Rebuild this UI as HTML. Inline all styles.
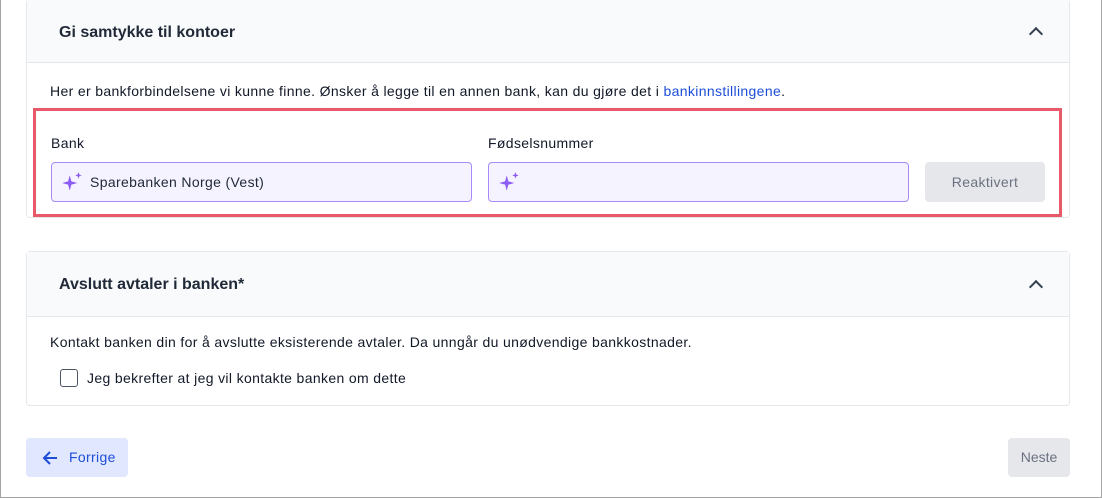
<!DOCTYPE html><html><head><style>
*{box-sizing:border-box;margin:0;padding:0}
body{width:1102px;height:498px;background:#fff;font-family:"Liberation Sans",sans-serif;color:#1f2937;position:relative;overflow:hidden}
.frame{position:absolute;left:0;top:0;width:1102px;height:498px;border:1px solid #a3a3a3;border-top:none}
.card{position:absolute;left:26px;width:1044px;border:1px solid #e5e7eb;border-radius:4px;background:#fff}
.hd{height:62px;background:#f9fafb;border-bottom:1px solid #e5e7eb;position:relative;font-weight:bold;font-size:16px;padding:24px 0 0 32px;color:#1f2937}
.chev{position:absolute;right:28px;top:29px;width:10px;height:10px;border-left:2px solid #374151;border-top:2px solid #374151;transform:rotate(45deg)}
.t{position:absolute;font-size:14px;color:#111827;letter-spacing:0.35px}
.inp{position:absolute;height:40px;border:1px solid #a78bfa;background:#f5f3ff;border-radius:4px;font-size:14px;padding:11px 0 0 38px;letter-spacing:0.35px}
.inp svg{position:absolute;left:9px;top:8px}
</style></head><body>
<div class="frame"></div>
<div class="card" style="top:-1px;height:219px">
<div class="hd" style="height:63px">Gi samtykke til kontoer<div class="chev"></div></div>
</div>
<div class="t" style="left:50px;top:83px">Her er bankforbindelsene vi kunne finne. Ønsker å legge til en annen bank, kan du gjøre det i <span style="color:#1d4ed8">bankinnstillingene</span>.</div>
<div style="position:absolute;left:33px;top:108px;width:1029px;height:109px;border:3px solid #e85a6a"></div>
<div class="t" style="left:51px;top:135px">Bank</div>
<div class="t" style="left:488px;top:135px">Fødselsnummer</div>
<div class="inp" style="left:51px;top:162px;width:421px">
<svg width="24" height="24" viewBox="0 0 22 22" fill="#8b5cf6"><path d="M8 4 L9.5 9.5 L15 11 L9.5 12.5 L8 18 L6.5 12.5 L1 11 L6.5 9.5Z"/><path d="M16 1 L16.8 3.2 L19 4 L16.8 4.8 L16 7 L15.2 4.8 L13 4 L15.2 3.2Z"/></svg>Sparebanken Norge (Vest)</div>
<div class="inp" style="left:488px;top:162px;width:421px">
<svg width="24" height="24" viewBox="0 0 22 22" fill="#8b5cf6"><path d="M8 4 L9.5 9.5 L15 11 L9.5 12.5 L8 18 L6.5 12.5 L1 11 L6.5 9.5Z"/><path d="M16 1 L16.8 3.2 L19 4 L16.8 4.8 L16 7 L15.2 4.8 L13 4 L15.2 3.2Z"/></svg></div>
<div style="position:absolute;left:925px;top:162px;width:120px;height:40px;background:#e5e7eb;border-radius:4px;color:#6b7280;font-size:14px;text-align:center;line-height:40px;letter-spacing:0.35px">Reaktivert</div>
<div class="card" style="top:251px;height:155px">
<div class="hd" style="height:65px;padding-top:24px">Avslutt avtaler i banken*<div class="chev" style="top:30px"></div></div>
</div>
<div class="t" style="left:50px;top:334px">Kontakt banken din for å avslutte eksisterende avtaler. Da unngår du unødvendige bankkostnader.</div>
<div style="position:absolute;left:60px;top:369px;width:18px;height:18px;border:1.5px solid #4b5563;border-radius:3px;background:#fff"></div>
<div class="t" style="left:87px;top:370px">Jeg bekrefter at jeg vil kontakte banken om dette</div>
<div style="position:absolute;left:26px;top:438px;width:102px;height:39px;background:#e0e7ff;border-radius:4px;color:#1d4ed8;font-size:14px;line-height:39px;padding-left:43px;letter-spacing:0.35px">
<svg style="position:absolute;left:15px;top:11px" width="18" height="18" viewBox="0 0 18 18" fill="none" stroke="#1d4ed8" stroke-width="2"><path d="M16 9H3M9 3L3 9l6 6"/></svg>Forrige</div>
<div style="position:absolute;left:1008px;top:438px;width:62px;height:39px;background:#e5e7eb;border-radius:4px;color:#6b7280;font-size:14px;line-height:39px;text-align:center">Neste</div>
</body></html>
